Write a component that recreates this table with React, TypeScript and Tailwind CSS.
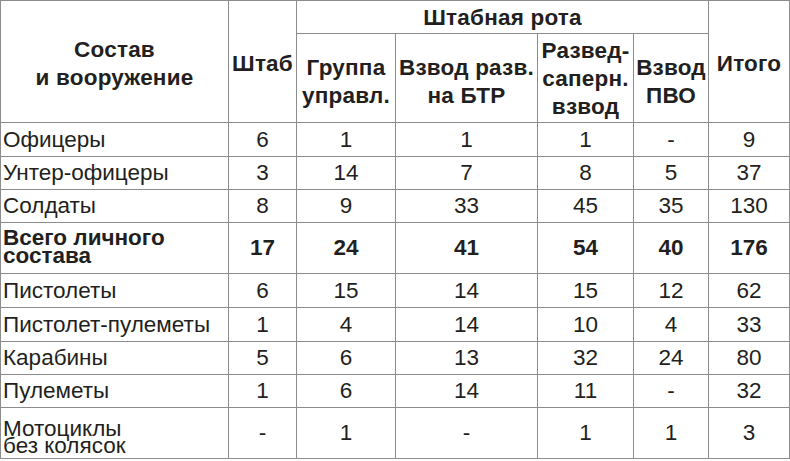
const rows: { lines: string[]; values: string[]; bold?: boolean }[] = [
  { lines: ["Офицеры"], values: ["6", "1", "1", "1", "-", "9"] },
  { lines: ["Унтер-офицеры"], values: ["3", "14", "7", "8", "5", "37"] },
  { lines: ["Солдаты"], values: ["8", "9", "33", "45", "35", "130"] },
  { lines: ["Всего личного", "состава"], values: ["17", "24", "41", "54", "40", "176"], bold: true },
  { lines: ["Пистолеты"], values: ["6", "15", "14", "15", "12", "62"] },
  { lines: ["Пистолет-пулеметы"], values: ["1", "4", "14", "10", "4", "33"] },
  { lines: ["Карабины"], values: ["5", "6", "13", "32", "24", "80"] },
  { lines: ["Пулеметы"], values: ["1", "6", "14", "11", "-", "32"] },
  { lines: ["Мотоциклы", "без колясок"], values: ["-", "1", "-", "1", "1", "3"] },
];

const heights = ["h-[34px]", "h-[33px]", "h-[33px]", "h-[51px]", "h-[34px]", "h-[34px]", "h-[33px]", "h-[33px]", "h-[51px]"];

const cell = "border-[1.5px] border-[#8c8c8c]";

export default function App() {
  return (
    <div className="w-[790px] h-[461px] bg-white text-[#231f20] font-['Liberation_Sans',Arial,sans-serif]">
      <table className="w-[789px] table-fixed border-collapse">
        <colgroup>
          <col className="w-[228px]" />
          <col className="w-[68px]" />
          <col className="w-[99px]" />
          <col className="w-[142px]" />
          <col className="w-[96px]" />
          <col className="w-[75px]" />
          <col className="w-[81px]" />
        </colgroup>
        <thead className="text-[22.5px] font-bold leading-[28px] tracking-[0.2px]">
          <tr className="h-[33px]">
            <th rowSpan={2} className={`${cell} pt-1`}>
              Состав
              <br />и вооружение
            </th>
            <th rowSpan={2} className={`${cell} pt-1 px-0`}>Штаб</th>
            <th colSpan={4} className={`${cell} pt-0.5`}>Штабная рота</th>
            <th rowSpan={2} className={`${cell} pt-1`}>Итого</th>
          </tr>
          <tr className="h-[89px]">
            <th className={`${cell} pt-2 px-0`}>
              Группа
              <br />
              управл.
            </th>
            <th className={`${cell} pt-2 px-0`}>
              Взвод разв.
              <br />
              на БТР
            </th>
            <th className={`${cell} pt-0.5 px-0`}>
              Развед-
              <br />
              саперн.
              <br />
              взвод
            </th>
            <th className={`${cell} pt-2 px-0`}>
              Взвод
              <br />
              ПВО
            </th>
          </tr>
        </thead>
        <tbody className="text-[22.5px] leading-[24px]">
          {rows.map((row, i) => (
            <tr key={row.lines[0]} className={`${heights[i]} ${row.bold ? "font-bold" : ""}`}>
              <td
                className={`${cell} pl-[2px] pr-0 text-left whitespace-nowrap ${
                  row.lines.length > 1 ? (row.bold ? "leading-[18px] pb-0.5" : "leading-[17px] pt-2") : ""
                }`}
              >
                {row.lines.map((line, k) => (
                  <div key={k}>{line}</div>
                ))}
              </td>
              {row.values.map((v, j) => (
                <td key={j} className={`${cell} text-center`}>
                  {v}
                </td>
              ))}
            </tr>
          ))}
        </tbody>
      </table>
    </div>
  );
}
